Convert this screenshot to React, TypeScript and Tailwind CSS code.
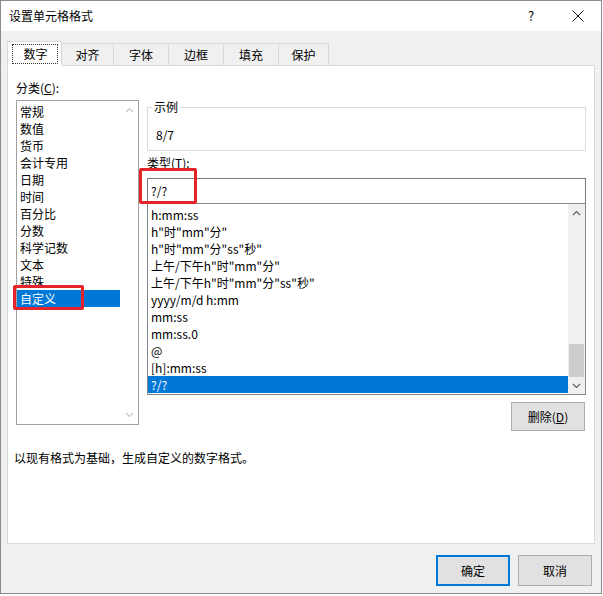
import React from "react";

const categories = ["常规", "数值", "货币", "会计专用", "日期", "时间", "百分比", "分数", "科学记数", "文本", "特殊", "自定义"];

const formats = [
  "h:mm:ss",
  'h"时"mm"分"',
  'h"时"mm"分"ss"秒"',
  '上午/下午h"时"mm"分"',
  '上午/下午h"时"mm"分"ss"秒"',
  "yyyy/m/d h:mm",
  "mm:ss",
  "mm:ss.0",
  "@",
  "[h]:mm:ss",
  "?/?",
];

const tabs = [
  { label: "数字", w: "w-[55px]" },
  { label: "对齐", w: "w-[52px]" },
  { label: "字体", w: "w-[55px]" },
  { label: "边框", w: "w-[55px]" },
  { label: "填充", w: "w-[55px]" },
  { label: "保护", w: "w-[50px]" },
];

function Chevron({ up, color }: { up?: boolean; color: string }) {
  return (
    <svg width="9" height="6" viewBox="0 0 9 6" fill="none">
      <path d={up ? "M1 5 L4.5 1.5 L8 5" : "M1 1 L4.5 4.5 L8 1"} stroke={color} strokeWidth="1.2" />
    </svg>
  );
}

export default function App() {
  return (
    <div className="relative w-[603px] h-[596px] bg-white text-[12px] leading-[16px] text-black font-['Noto_Sans_CJK_SC',sans-serif]">
      <div className="w-[602px] h-[594px] border border-[#8c8c8c] bg-[#f0f0f0] flex flex-col">
        {/* Title bar */}
        <div className="h-[30px] bg-white flex items-center pl-[8px] shrink-0">
          <span className="flex-1">设置单元格格式</span>
          <span className="w-[10px] text-[13px] mr-[34px]">?</span>
          <svg width="12" height="12" viewBox="0 0 12 12" className="mr-[17px]">
            <path d="M0.5 0.5 L11.5 11.5 M11.5 0.5 L0.5 11.5" stroke="#111" strokeWidth="1" />
          </svg>
        </div>

        {/* Tabs */}
        <div className="flex items-end pl-[6px] pt-[10px] h-[35px] relative z-10 -mb-px">
          {tabs.map((t, i) =>
            i === 0 ? (
              <div key={t.label} className={`${t.w} h-[25px] bg-white border border-[#d9d9d9] border-b-white relative flex items-center justify-center pl-[2px]`}>
                <div className="absolute top-[2px] bottom-[1px] left-[4px] right-[3px] border border-dotted border-[#333]" />
                {t.label}
              </div>
            ) : (
              <div key={t.label} className={`${t.w} h-[23px] bg-[#f0f0f0] border border-l-0 border-[#d9d9d9] flex items-center justify-center`}>
                {t.label}
              </div>
            )
          )}
        </div>

        {/* Panel */}
        <div className="ml-[6px] w-[588px] h-[479px] bg-white border border-[#d9d9d9] flex flex-col">
          <div className="flex pl-[8px]">
            {/* Left column */}
            <div className="w-[123px] pt-[14px]">
              <div>
                分类(<span className="underline">C</span>):
              </div>
              <div className="mt-[4px] h-[325px] border border-[#a0a0a0] flex">
                <div className="flex-1 pt-[2px]">
                  {categories.map((c, i) => (
                    <div key={c} className={`h-[17px] pl-[3px] leading-[17px] ${i === 11 ? "bg-[#0078d7] text-white" : ""}`}>
                      {c}
                    </div>
                  ))}
                </div>
                <div className="w-[18px] flex flex-col justify-between items-center py-[6px]">
                  <Chevron up color="#c8c8c8" />
                  <Chevron color="#c8c8c8" />
                </div>
              </div>
            </div>

            {/* Right column */}
            <div className="ml-[8px] w-[439px] flex flex-col pt-[41px]">
              <div className="relative h-[44px] border border-[#dcdcdc] pl-[8px] pt-[19px]">
                <span className="absolute -top-[9px] left-[4px] bg-white px-[2px]">示例</span>
                8/7
              </div>
              <div className="mt-[4px]">
                类型(<span className="underline">T</span>):
              </div>
              <div className="mt-[7px] h-[26px] border border-[#7a7a7a] pl-[3px] flex items-center">?/?</div>
              <div className="-mt-px h-[192px] border border-[#828790] flex">
                <div className="flex-1 pt-[2px]">
                  {formats.map((f, i) => (
                    <div key={f} className={`h-[17px] pl-[3px] leading-[17px] ${i === 10 ? "bg-[#0078d7] text-white" : ""}`}>
                      {f}
                    </div>
                  ))}
                </div>
                <div className="w-[17px] bg-[#f0f0f0] flex flex-col">
                  <div className="h-[17px] flex items-center justify-center">
                    <Chevron up color="#606060" />
                  </div>
                  <div className="flex-1 flex flex-col justify-end px-[1px]">
                    <div className="h-[33px] bg-[#cdcdcd]" />
                  </div>
                  <div className="h-[17px] flex items-center justify-center">
                    <Chevron color="#606060" />
                  </div>
                </div>
              </div>
              <div className="self-end mr-[1px] mt-[7px] w-[74px] h-[29px] bg-[#e1e1e1] border border-[#adadad] flex items-center justify-center">
                删除(<span className="underline">D</span>)
              </div>
            </div>
          </div>
          <div className="pl-[6px] mt-[19px]">以现有格式为基础，生成自定义的数字格式。</div>
        </div>

        {/* Bottom buttons */}
        <div className="flex justify-end gap-[8px] pr-[9px] mt-[11px]">
          <div className="w-[74px] h-[31px] bg-[#e1e1e1] border-2 border-[#0078d7] flex items-center justify-center">确定</div>
          <div className="w-[74px] h-[31px] bg-[#e1e1e1] border border-[#adadad] flex items-center justify-center">取消</div>
        </div>
      </div>

      {/* Red annotation boxes */}
      <div className="absolute left-[139px] top-[168px] w-[58px] h-[36px] border-[3px] border-[#e3242b] rounded-[2px]" />
      <div className="absolute left-[13px] top-[285px] w-[71px] h-[25px] border-[3px] border-[#e3242b] rounded-[2px]" />
    </div>
  );
}
